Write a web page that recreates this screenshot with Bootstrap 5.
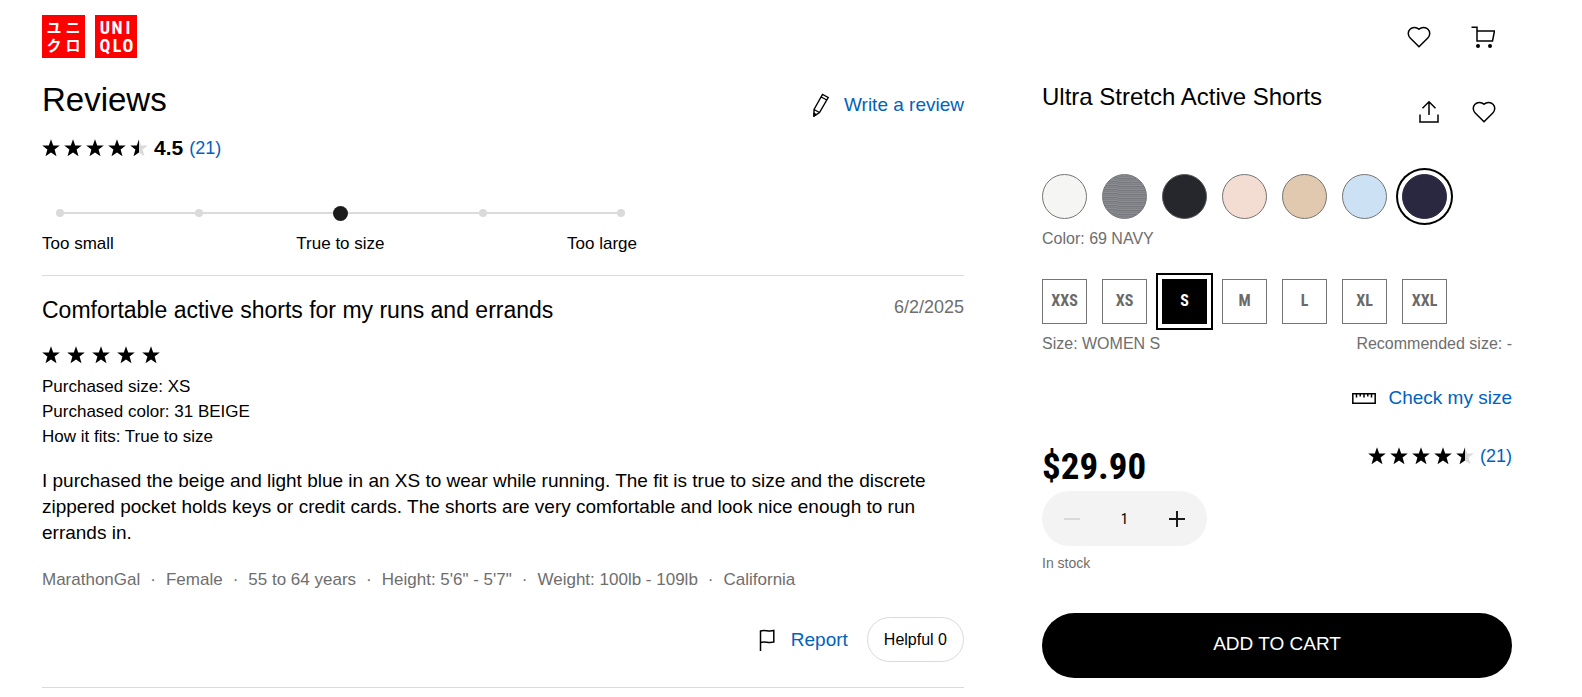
<!DOCTYPE html>
<html lang="en">
<head>
<meta charset="utf-8">
<meta name="viewport" content="width=device-width, initial-scale=1">
<title>Ultra Stretch Active Shorts - Reviews | UNIQLO</title>
<link href="https://cdn.jsdelivr.net/npm/bootstrap@5.3.0/dist/css/bootstrap.min.css" rel="stylesheet">
<style>
  :root { --uq-link: #0062bd; --uq-grey: #6e6e6e; --uq-line: #dadada; --uq-narrow: "Roboto Condensed", Roboto, sans-serif; }
  body { font-family: "Liberation Sans", Arial, sans-serif; font-size: 18px; line-height: 26px; color: #000; background: #fff; }
  a { color: var(--uq-link); text-decoration: none; }
  .uq-page { padding-left: 42px; padding-right: 70px; }
  .uq-header { padding: 15px 17px 20px 0; }
  .uq-logo { gap: 10px; }
  .uq-logo text { fill: #fff; font-weight: 700; text-anchor: middle; }
  .uq-kana { font-family: "Noto Sans CJK JP", sans-serif; font-size: 15px; }
  .uq-latin { font-family: var(--uq-narrow); font-size: 18px; }
  .uq-icons { gap: 40px; }
  .uq-icon-btn { border: 0; background: none; padding: 0; line-height: 0; color: #000; }
  .uq-grid { display: grid; grid-template-columns: minmax(0, 922fr) minmax(0, 470fr); column-gap: 78px; }
  @media (max-width: 991px) { .uq-grid { grid-template-columns: minmax(0, 1fr); } }
  .uq-h1 { font-size: 33px; line-height: 44px; font-weight: 400; }
  .uq-h2 { font-size: 24px; line-height: 32px; font-weight: 400; }
  .uq-h3 { font-size: 23px; line-height: 32px; font-weight: 400; }
  .uq-action { font-size: 19px; }
  .uq-write { gap: 14px; margin-bottom: 4px; }
  .uq-score { font-size: 21px; margin: 0 6px; }
  .uq-rating { margin-top: 13px; }
  .uq-stars { gap: 4px; }
  .uq-stars-wide { gap: 7px; margin-top: 20px; }
  .uq-grey { color: var(--uq-grey); }
  .uq-caption { font-size: 16px; line-height: 24px; color: var(--uq-grey); margin-top: 8px; }
  .uq-rule { border-bottom: 1px solid var(--uq-line); }
  .uq-fit { max-width: 595px; margin-top: 44px; padding-bottom: 19px; }
  .uq-track { height: 16px; padding: 0 12px 0 14px; }
  .uq-dot { width: 8px; height: 8px; border-radius: 50%; background: var(--uq-line); }
  .uq-dot-on { width: 15px; height: 15px; background: #1b1b1b; }
  .uq-seg { height: 2px; background: var(--uq-line); }
  .uq-fit-labels { font-size: 17px; line-height: 24px; margin-top: 11px; }
  .uq-review { padding: 18px 0 25px; }
  .uq-details { font-size: 17px; line-height: 25px; margin-top: 10px; }
  .uq-body { font-size: 19px; margin-top: 19px; }
  .uq-meta { font-size: 17px; gap: 0 10px; margin-top: 21px; }
  .uq-helpful { height: 45px; padding: 0 16px; font-size: 16px; border: 1px solid var(--uq-line); border-radius: 23px; background: #fff; color: #000; }
  .uq-title-icons { gap: 31px; padding-top: 19px; }
  .uq-options { gap: 15px; }
  .uq-colors { margin-top: 50px; }
  .uq-sizes { margin-top: 28px; }
  .uq-check { margin-top: 29px; }
  .uq-check a { gap: 12px; }
  .uq-buy { margin-top: 32px; }
  .uq-option { width: 45px; height: 45px; border: 1px solid #757575; cursor: pointer; }
  .btn-check:checked + .uq-option { box-shadow: 0 0 0 4px #fff, 0 0 0 6px #000; }
  .uq-size { font-family: var(--uq-narrow); font-weight: 700; font-size: 16px; color: #6a6a6a; padding-bottom: 2px; }
  .btn-check:checked + .uq-size { background: #000; border-color: #000; color: #fff; }
  .sw-white { background: #f5f5f3; } .sw-black { background: #25272c; border-color: #55575b; }
  .sw-grey { background: repeating-linear-gradient(2deg, #77797f 0 1px, #8b8d93 1px 2px, #7e8086 2px 3px, #85878d 3px 4px); }
  .sw-pink { background: #f3dcd2; } .sw-beige { background: #e1c9b0; }
  .sw-blue { background: #cde1f4; } .sw-navy { background: #292840; border-color: #292840; }
  .uq-price { font-family: var(--uq-narrow); font-weight: 700; font-size: 37px; line-height: 48px; }
  .uq-qty { width: 165px; height: 55px; border-radius: 28px; background: #f3f3f3; padding: 0 20px; }
  .uq-qty input { width: 40px; border: 0; background: none; padding: 0; text-align: center; font-family: var(--uq-narrow); font-size: 15px; color: #000; }
  .uq-stock { font-size: 14px; line-height: 20px; margin-top: 7px; }
  .uq-cart { height: 65px; border: 0; border-radius: 33px; background: #000; color: #fff; font-size: 19px; margin-top: 40px; padding: 0 0 3px; }
</style>
</head>
<body>
<svg class="d-none" aria-hidden="true">
  <symbol id="star" viewBox="0 0 18 18"><path d="M9 0.300 11.200 6.500H17.800L12.600 10.600 14.500 17.300 9 13.400 3.500 17.300 5.400 10.600 0.200 6.500H6.800Z"/></symbol>
  <symbol id="half" viewBox="0 0 18 18"><path fill="#dadada" d="M9 0.300 11.200 6.500H17.800L12.600 10.600 14.500 17.300 9 13.400Z"/><path d="M9 0.300V13.400L3.500 17.300 5.400 10.600 0.200 6.500H6.800Z"/></symbol>
  <symbol id="heart" viewBox="0 0 24 24"><path fill="none" stroke="#000" stroke-width="1.500" d="M12 21.800 3.200 13C.6 10.400.7 6.500 3 4.300 5.200 2.100 9.200 1.600 12 4.300 14.800 1.600 18.800 2.100 21 4.300 23.300 6.500 23.400 10.400 20.800 13Z"/></symbol>
</svg>

<div class="uq-page">
  <header class="uq-header d-flex justify-content-between align-items-center">
    <a href="#" class="uq-logo d-flex" aria-label="UNIQLO home">
      <svg width="43" height="43" viewBox="0 0 43 43"><rect width="43" height="43" fill="#f00"/>
        <g class="uq-kana"><text x="12" y="18">ユ</text><text x="31" y="18">ニ</text><text x="12" y="36">ク</text><text x="31" y="36">ロ</text></g></svg>
      <svg width="42" height="43" viewBox="0 0 42 43"><rect width="42" height="43" fill="#f00"/>
        <g class="uq-latin"><text x="10" y="19">U</text><text x="22" y="19">N</text><text x="33" y="19">I</text><text x="10" y="37">Q</text><text x="22" y="37">L</text><text x="33" y="37">O</text></g></svg>
    </a>
    <nav class="uq-icons d-flex" aria-label="Account">
      <a href="#" aria-label="Wish list" class="d-flex"><svg width="24" height="24"><use href="#heart"/></svg></a>
      <a href="#" aria-label="Cart" class="d-flex"><svg width="24" height="24" viewBox="0 0 24 24" fill="none" stroke="#000" stroke-width="1.500"><path d="M0.500 2.200H6V16H21.500L23.500 6H6"/><g fill="#000" stroke="none"><circle cx="7" cy="21" r="2"/><circle cx="19" cy="21" r="2"/></g></svg></a>
    </nav>
  </header>

  <main class="uq-grid">
    <section>
      <div class="d-flex justify-content-between align-items-end">
        <h1 class="uq-h1 m-0">Reviews</h1>
        <a href="#" class="uq-action uq-write d-flex align-items-center"><svg width="18" height="24" viewBox="0 0 18 24" fill="none" stroke="#000" stroke-width="1.400"><path d="M2 16.500 10.500 1.500 16.200 4.500 7.500 19.500 2 23Z M9.200 4 14.800 7 M2 16.500 7.500 19.500"/><path fill="#000" d="M2 20.500 4.200 21.500 2 23Z"/></svg><span>Write a review</span></a>
      </div>
      <div class="uq-rating d-flex align-items-center">
        <span class="uq-stars d-flex" role="img" aria-label="4.5 out of 5">
          <svg width="18" height="18"><use href="#star"/></svg><svg width="18" height="18"><use href="#star"/></svg><svg width="18" height="18"><use href="#star"/></svg><svg width="18" height="18"><use href="#star"/></svg><svg width="18" height="18"><use href="#half"/></svg>
        </span>
        <b class="uq-score">4.5</b><a href="#">(21)</a>
      </div>

      <div class="uq-rule">
        <div class="uq-fit">
          <div class="uq-track d-flex align-items-center">
            <i class="uq-dot"></i><i class="uq-seg flex-fill"></i><i class="uq-dot"></i><i class="uq-seg flex-fill"></i><i class="uq-dot uq-dot-on"></i><i class="uq-seg flex-fill"></i><i class="uq-dot"></i><i class="uq-seg flex-fill"></i><i class="uq-dot"></i>
          </div>
          <div class="uq-fit-labels d-flex justify-content-between"><span>Too small</span><span>True to size</span><span>Too large</span></div>
        </div>
      </div>

      <article class="uq-review uq-rule">
        <div class="d-flex justify-content-between">
          <h2 class="uq-h3 m-0">Comfortable active shorts for my runs and errands</h2>
          <time class="uq-grey" datetime="2025-06-02">6/2/2025</time>
        </div>
        <div class="uq-stars-wide d-flex" role="img" aria-label="5 out of 5">
          <svg width="18" height="18"><use href="#star"/></svg><svg width="18" height="18"><use href="#star"/></svg><svg width="18" height="18"><use href="#star"/></svg><svg width="18" height="18"><use href="#star"/></svg><svg width="18" height="18"><use href="#star"/></svg>
        </div>
        <div class="uq-details"><div>Purchased size: XS</div><div>Purchased color: 31 BEIGE</div><div>How it fits: True to size</div></div>
        <p class="uq-body mb-0">I purchased the beige and light blue in an XS to wear while running. The fit is true to size and the discrete zippered pocket holds keys or credit cards. The shorts are very comfortable and look nice enough to run errands in.</p>
        <div class="uq-meta uq-grey d-flex flex-wrap"><span>MarathonGal</span><span>·</span><span>Female</span><span>·</span><span>55 to 64 years</span><span>·</span><span>Height: 5'6" - 5'7"</span><span>·</span><span>Weight: 100lb - 109lb</span><span>·</span><span>California</span></div>
        <div class="d-flex justify-content-end align-items-center mt-4" style="gap: 19px">
          <a href="#" class="uq-action d-flex align-items-center gap-3"><svg width="16" height="22" viewBox="0 0 16 22" fill="none" stroke="#000" stroke-width="1.500"><path d="M1.500 22V2C6 .5 9.500 3 14.800 1.500V13C9.500 14.500 6 12 1.500 13.500"/></svg><span>Report</span></a>
          <button type="button" class="uq-helpful">Helpful 0</button>
        </div>
      </article>
    </section>

    <section>
      <div class="d-flex justify-content-between" style="padding-top: 3px">
        <h2 class="uq-h2 m-0">Ultra Stretch Active Shorts</h2>
        <div class="uq-title-icons d-flex pe-3">
          <button type="button" class="uq-icon-btn" aria-label="Share"><svg width="24" height="24" viewBox="0 0 24 24" fill="none" stroke="#000" stroke-width="1.500"><path d="M12 15V2M5.500 8.200 12 1.700 18.500 8.200M3 14.500V22H21V14.500"/></svg></button>
          <button type="button" class="uq-icon-btn" aria-label="Add to wish list"><svg width="24" height="24"><use href="#heart"/></svg></button>
        </div>
      </div>

      <div class="uq-options uq-colors d-flex" role="radiogroup" aria-label="Color">
        <input class="btn-check" type="radio" name="color" id="c0"><label class="uq-option rounded-circle sw-white" for="c0" aria-label="White"></label>
        <input class="btn-check" type="radio" name="color" id="c1"><label class="uq-option rounded-circle sw-grey" for="c1" aria-label="Gray"></label>
        <input class="btn-check" type="radio" name="color" id="c2"><label class="uq-option rounded-circle sw-black" for="c2" aria-label="Black"></label>
        <input class="btn-check" type="radio" name="color" id="c3"><label class="uq-option rounded-circle sw-pink" for="c3" aria-label="Pink"></label>
        <input class="btn-check" type="radio" name="color" id="c4"><label class="uq-option rounded-circle sw-beige" for="c4" aria-label="Beige"></label>
        <input class="btn-check" type="radio" name="color" id="c5"><label class="uq-option rounded-circle sw-blue" for="c5" aria-label="Light blue"></label>
        <input class="btn-check" type="radio" name="color" id="c6" checked><label class="uq-option rounded-circle sw-navy" for="c6" aria-label="Navy"></label>
      </div>
      <div class="uq-caption">Color: 69 NAVY</div>

      <div class="uq-options uq-sizes d-flex" role="radiogroup" aria-label="Size">
        <input class="btn-check" type="radio" name="size" id="s0"><label class="uq-option uq-size d-flex align-items-center justify-content-center" for="s0">XXS</label>
        <input class="btn-check" type="radio" name="size" id="s1"><label class="uq-option uq-size d-flex align-items-center justify-content-center" for="s1">XS</label>
        <input class="btn-check" type="radio" name="size" id="s2" checked><label class="uq-option uq-size d-flex align-items-center justify-content-center" for="s2">S</label>
        <input class="btn-check" type="radio" name="size" id="s3"><label class="uq-option uq-size d-flex align-items-center justify-content-center" for="s3">M</label>
        <input class="btn-check" type="radio" name="size" id="s4"><label class="uq-option uq-size d-flex align-items-center justify-content-center" for="s4">L</label>
        <input class="btn-check" type="radio" name="size" id="s5"><label class="uq-option uq-size d-flex align-items-center justify-content-center" for="s5">XL</label>
        <input class="btn-check" type="radio" name="size" id="s6"><label class="uq-option uq-size d-flex align-items-center justify-content-center" for="s6">XXL</label>
      </div>
      <div class="uq-caption d-flex justify-content-between"><span>Size: WOMEN S</span><span>Recommended size: -</span></div>

      <div class="uq-check d-flex justify-content-end">
        <a href="#" class="uq-action d-flex align-items-center"><svg width="24" height="12" viewBox="0 0 24 12" fill="none" stroke="#000" stroke-width="1.500"><path d="M.8 1.800H23.200V11.200H.8ZM4.500 2V5.500M8.200 2V4.500M12 2V5.500M15.800 2V4.500M19.500 2V5.500"/></svg>Check my size</a>
      </div>

      <div class="uq-buy d-flex justify-content-between align-items-start">
        <div class="uq-price">$29.90</div>
        <div class="d-flex align-items-center" style="gap: 6px">
          <span class="uq-stars d-flex" role="img" aria-label="4.5 out of 5">
            <svg width="18" height="18"><use href="#star"/></svg><svg width="18" height="18"><use href="#star"/></svg><svg width="18" height="18"><use href="#star"/></svg><svg width="18" height="18"><use href="#star"/></svg><svg width="18" height="18"><use href="#half"/></svg>
          </span>
          <a href="#">(21)</a>
        </div>
      </div>
      <div class="uq-qty d-flex align-items-center justify-content-between">
        <button type="button" class="uq-icon-btn" aria-label="Decrease quantity" disabled><svg width="20" height="20" stroke="#dadada" stroke-width="2"><path d="M2 10H18"/></svg></button>
        <input type="text" value="1" aria-label="Quantity">
        <button type="button" class="uq-icon-btn" aria-label="Increase quantity"><svg width="20" height="20" stroke="#1b1b1b" stroke-width="2"><path d="M2 10H18M10 2V18"/></svg></button>
      </div>
      <div class="uq-stock uq-grey">In stock</div>
      <button type="button" class="uq-cart w-100">ADD TO CART</button>
    </section>
  </main>
</div>
<script src="https://cdn.jsdelivr.net/npm/bootstrap@5.3.0/dist/js/bootstrap.bundle.min.js"></script>
</body>
</html>
